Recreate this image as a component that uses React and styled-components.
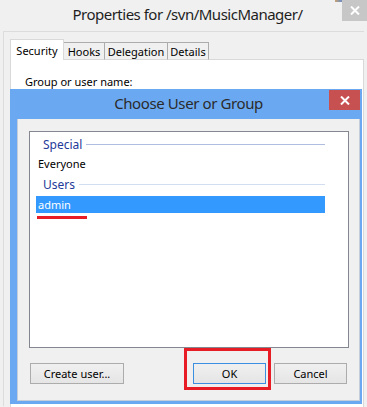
import React from 'react'
import styled, { createGlobalStyle } from 'styled-components'

const Global = createGlobalStyle`
  html, body {
    margin: 0;
    padding: 0;
    background: #f0f0f0;
  }
  body {
    font-family: "Noto Sans", "Segoe UI", sans-serif;
    font-size: 11px;
    color: #000;
  }
`

const Screen = styled.div`
  position: relative;
  width: 367px;
  height: 407px;
  overflow: hidden;
  background: #f0f0f0;
`

const WinTitle = styled.div`
  height: 31px;
  display: flex;
  align-items: center;
  justify-content: center;
  font-size: 15px;
  letter-spacing: -0.5px;
  color: #1e1e1e;
  position: relative;
  padding: 0 0 3px 8px;
  box-sizing: border-box;
`

const GrayClose = styled.div`
  position: absolute;
  top: 0;
  right: 0;
  width: 25px;
  height: 21px;
  background: #c7c7c7;
  display: flex;
  align-items: center;
  justify-content: center;
`

const Specks = styled.div`
  position: absolute;
  top: 0;
  right: 8px;
  width: 24px;
  height: 2px;
  background: linear-gradient(90deg, #c9a070, #7090c0, #d08050, #6080b0, #b07060);
`

const WinBody = styled.div`
  margin-left: 3px;
  margin-right: 3px;
  border-top: 1px solid #dcdcdc;
  border-left: 1px solid #dcdcdc;
  height: 375px;
  padding: 7px 0 0 6px;
  box-sizing: border-box;
`

const Tabs = styled.div`
  display: flex;
  align-items: flex-end;
  height: 21px;
`

const Tab = styled.div`
  width: ${p => p.$w};
  height: ${p => (p.$active ? '21px' : '18px')};
  margin-left: ${p => (p.$active ? '0' : '-1px')};
  display: flex;
  align-items: center;
  justify-content: center;
  box-sizing: border-box;
  border: 1px solid ${p => (p.$active ? '#d9d9d9' : '#acacac')};
  border-bottom: ${p => (p.$active ? 'none' : '1px solid #d9d9d9')};
  background: ${p => (p.$active ? '#fff' : '#f0f0f0')};
  position: relative;
  z-index: ${p => (p.$active ? 2 : 1)};
`

const Panel = styled.div`
  margin-top: -1px;
  background: #fff;
  border: 1px solid #d9d9d9;
  height: 360px;
  padding: 14px 0 0 14px;
  box-sizing: border-box;
`

const Dialog = styled.div`
  position: absolute;
  left: 10px;
  top: 89px;
  width: 352px;
  height: 315px;
  background: #6aa9f1;
  display: flex;
  flex-direction: column;
  padding: 0 2px 3px 7px;
  box-sizing: border-box;
`

const DlgTitle = styled.div`
  height: 30px;
  position: relative;
  display: flex;
  align-items: center;
  justify-content: center;
  font-size: 15px;
  letter-spacing: -0.4px;
  color: #2b2b2b;
  padding: 0 0 2px 0;
  box-sizing: border-box;
`

const RedClose = styled.div`
  position: absolute;
  top: 1px;
  right: 0;
  width: 31px;
  height: 20px;
  background: #c75050;
  display: flex;
  align-items: center;
  justify-content: center;
`

const Client = styled.div`
  flex: 1;
  background: #f0f0f0;
  border: 1px solid #c4cdd8;
  border-top: none;
  padding: 12px 10px 0 11px;
  display: flex;
  flex-direction: column;
  box-sizing: border-box;
`

const ListBox = styled.div`
  height: 217px;
  background: #fff;
  border: 1px solid #828790;
  box-sizing: border-box;
  padding: 3px 23px 0 6px;
`

const GroupHead = styled.div`
  display: flex;
  align-items: center;
  height: 18px;
  margin-top: ${p => p.$top || '0'};
  padding-left: 7px;
  font-size: 12px;
  color: #1e3a9a;
  gap: 4px;
  &::after {
    content: '';
    flex: 1;
    height: 1px;
    background: ${p => p.$line || '#aebde0'};
  }
`

const Item = styled.div`
  height: 17px;
  display: flex;
  align-items: center;
  padding-left: 2px;
  margin-top: ${p => p.$top || '0'};
  background: ${p => (p.$selected ? '#3399ff' : 'transparent')};
  color: ${p => (p.$selected ? '#fff' : '#000')};
`

const Underline = styled.div`
  width: 50px;
  height: 3px;
  margin: 3px 0 0 1px;
  background: #e81c24;
`

const ButtonRow = styled.div`
  display: flex;
  align-items: center;
  margin-top: 15px;
  padding-left: 1px;
`

const Button = styled.button`
  font-family: inherit;
  font-size: 11px;
  color: #000;
  width: ${p => p.$w || '73px'};
  height: 21px;
  padding: 0;
  background: linear-gradient(#f0f0f0, #e5e5e5);
  border: 1px solid ${p => (p.$focus ? '#3c8ee0' : '#acacac')};
  position: relative;
  margin-left: ${p => p.$ml || '0'};
`

const Mark = styled.div`
  position: absolute;
  left: -10px;
  top: -16px;
  right: -6px;
  bottom: -7px;
  border: 3px solid #e81c24;
  pointer-events: none;
`

const Cross = ({ color = '#fff' }) => (
  <svg width="10" height="9" viewBox="0 0 10 9">
    <path d="M1 0.5 L9 8.5 M9 0.5 L1 8.5" stroke={color} strokeWidth="2" />
  </svg>
)

export default function App() {
  return (
    <Screen>
      <Global />
      <WinTitle>
        Properties for /svn/MusicManager/
        <Specks />
        <GrayClose><Cross /></GrayClose>
      </WinTitle>
      <WinBody>
        <Tabs>
          <Tab $active $w="54px">Security</Tab>
          <Tab $w="42px">Hooks</Tab>
          <Tab $w="64px">Delegation</Tab>
          <Tab $w="42px">Details</Tab>
        </Tabs>
        <Panel>Group or user name:</Panel>
      </WinBody>

      <Dialog>
        <DlgTitle>
          Choose User or Group
          <RedClose><Cross /></RedClose>
        </DlgTitle>
        <Client>
          <ListBox>
            <GroupHead>Special</GroupHead>
            <Item $top="2px">Everyone</Item>
            <GroupHead $top="3px" $line="#d3ddf0">Users</GroupHead>
            <Item $top="3px" $selected>admin</Item>
            <Underline />
          </ListBox>
          <ButtonRow>
            <Button $w="94px">Create user...</Button>
            <Button $ml="69px" $focus>
              OK
              <Mark />
            </Button>
            <Button $ml="8px">Cancel</Button>
          </ButtonRow>
        </Client>
      </Dialog>
    </Screen>
  )
}
